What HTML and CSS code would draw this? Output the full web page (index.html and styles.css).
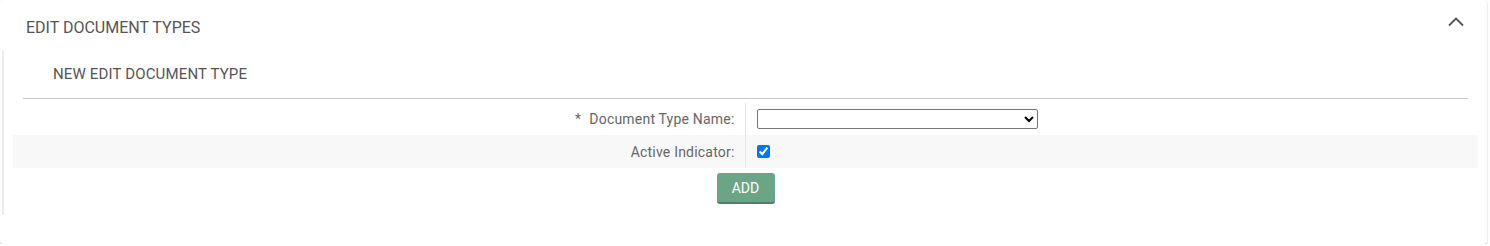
FILE: index.html
```html
<!DOCTYPE html>
<html>
<head>
<meta charset="utf-8">
<link rel="stylesheet" href="styles.css">
</head>
<body>
<div class="card">
  <div class="card-header">
    <span class="title">EDIT DOCUMENT TYPES</span>
    <svg class="chev" width="16" height="10" viewBox="0 0 16 10"><polyline points="1,8.5 8,1.5 15,8.5" fill="none" stroke="#555" stroke-width="1.8"/></svg>
  </div>
  <div class="card-body">
    <div class="subtitle">NEW EDIT DOCUMENT TYPE</div>
    <div class="rule"></div>
    <div class="form">
      <div class="row">
        <div class="label"><span class="req">*</span>Document Type Name:</div>
        <div class="field"><select class="sel"><option></option></select></div>
      </div>
      <div class="row alt">
        <div class="label">Active Indicator:</div>
        <div class="field"><input type="checkbox" class="chk" checked></div>
      </div>
    </div>
    <div class="actions"><button class="btn">ADD</button></div>
  </div>
</div>
</body>
</html>
```
FILE: styles.css
```css
html, body { margin: 0; padding: 0; background: #fff; }
body { font-family: Roboto, "Liberation Sans", sans-serif; color: #555; }
.card {
  width: 1487px;
  height: 244px;
  background: #fff;
  border-radius: 4px;
  box-shadow: 0 1px 2px rgba(0,0,0,0.25);
}
.card-header {
  height: 50px;
  display: flex;
  align-items: center;
  justify-content: space-between;
  padding: 0 23px 0 26px;
  box-sizing: border-box;
}
.title { font-size: 16px; color: #555; padding-top: 5px; }
.chev { margin-top: -6px; }
.card-body {
  margin-left: 2px;
  border-left: 2px solid #e9eded;
  height: 165px;
  padding: 0 9px;
  box-sizing: border-box;
}
.subtitle {
  height: 48px;
  display: flex;
  align-items: center;
  padding-left: 40px;
  font-size: 15px;
  letter-spacing: 0.15px;
  color: #555;
}
.rule { height: 1px; background: #c8c8c8; margin: 0 10px; }
.form { margin-top: 4px; }
.row { display: grid; grid-template-columns: 1fr 1fr; height: 32px; }
.row.alt { background: #f8f8f8; height: 33px; }
.label {
  border-right: 1px solid #e2e8e8;
  padding-right: 10px;
  font-size: 14px;
  letter-spacing: 0.2px;
  color: #666;
  display: flex;
  align-items: center;
  justify-content: flex-end;
}
.req { margin-right: 8px; }
.field { display: flex; align-items: center; padding-left: 11px; }
.sel {
  width: 281px;
  height: 20px;
  border: 1px solid #767676;
  border-radius: 2px;
  background: #fff;
  margin: 0;
}
.chk { margin: 0; width: 13px; height: 13px; }
.actions { display: flex; justify-content: center; padding-top: 5px; }
.btn {
  width: 58px;
  height: 31px;
  background: #6aa586;
  color: #fff;
  border: none;
  border-bottom: 2px solid #4f7f66;
  border-radius: 3px;
  font-family: Roboto, "Liberation Sans", sans-serif;
  font-size: 14px;
  font-weight: 400;
  margin: 0;
  padding: 0;
}
```
